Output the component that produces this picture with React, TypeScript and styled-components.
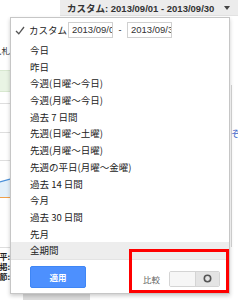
import styled, { createGlobalStyle } from "styled-components";

const GlobalStyle = createGlobalStyle`
  html, body {
    margin: 0;
    padding: 0;
    background: #ffffff;
  }
  body {
    font-family: "Noto Sans CJK JP", "Liberation Sans", sans-serif;
    color: #333;
  }
`;

const Page = styled.div`
  position: relative;
  width: 238px;
  height: 300px;
  overflow: hidden;
  background: #fff;
`;

const TopBar = styled.div`
  display: flex;
  justify-content: flex-end;
  height: 16px;
`;

const RangeButton = styled.div`
  width: 178px;
  display: flex;
  align-items: center;
  gap: 10px;
  padding-left: 7px;
  box-sizing: border-box;
  background: #ececec;
  border-bottom: 1px solid #e2e2e2;
  font-family: "Liberation Sans", "Noto Sans CJK JP", sans-serif;
  font-size: 9.5px;
  font-weight: bold;
  color: #333;
  white-space: nowrap;
`;

const Caret = styled.span`
  width: 0;
  height: 0;
  border-left: 3px solid transparent;
  border-right: 3px solid transparent;
  border-top: 4px solid #444;
`;

const Backdrop = styled.div`
  display: flex;
  justify-content: space-between;
  height: 278px;
`;

const LeftStrip = styled.div`
  width: 10px;
  display: flex;
  flex-direction: column;
  overflow: hidden;
`;

const CutText = styled.div<{ $top: number }>`
  margin-top: ${(p) => p.$top}px;
  display: flex;
  justify-content: flex-end;
  font-size: 8.5px;
  line-height: 12px;
  color: #333;
  white-space: nowrap;
`;

const GreenBand = styled.div`
  margin-top: 14px;
  height: 22px;
  box-sizing: border-box;
  background: #e9f4e4;
  border-top: 1px solid #d8e8d0;
  border-bottom: 1px solid #d8e8d0;
`;

const HLine = styled.div<{ $top: number }>`
  margin-top: ${(p) => p.$top}px;
  height: 1px;
  background: #dedede;
  flex: none;
`;

const Chart = styled.svg`
  margin-top: 15px;
  display: block;
  flex: none;
`;

const LabelStack = styled.div`
  margin-top: 4px;
  display: flex;
  flex-direction: column;
  align-items: flex-end;
  font-size: 8px;
  font-weight: bold;
  line-height: 10px;
  color: #222;
  white-space: nowrap;
`;

const RightStrip = styled.div`
  width: 8px;
  display: flex;
  flex-direction: column;
`;

const VLine = styled.div`
  margin-top: 69px;
  margin-left: 1px;
  width: 1px;
  height: 162px;
  background: #d6d6d6;
`;

const BlueFrag = styled.div`
  position: absolute;
  right: -2px;
  top: 127px;
  font-size: 9px;
  color: #3b64c8;
`;

const BottomStrip = styled.div`
  display: flex;
  padding-left: 23px;
  height: 6px;
`;

const GreyBlock = styled.div`
  width: 67px;
  background: #dcdcdc;
`;

const Menu = styled.div`
  position: absolute;
  left: 10px;
  top: 17px;
  width: 220px;
  height: 277px;
  box-sizing: border-box;
  background: #fff;
  border: 1px solid #c6c6c6;
  box-shadow: 0 2px 4px rgba(0, 0, 0, 0.2);
  display: flex;
  flex-direction: column;
`;

const CustomRow = styled.div`
  height: 24px;
  display: flex;
  align-items: center;
  padding-left: 4px;
  font-size: 9.5px;
  color: #222;
`;

const CheckSlot = styled.span`
  width: 14px;
  display: flex;
  align-items: center;
`;

const CustomLabel = styled.span`
  width: 39px;
  white-space: nowrap;
`;

const DateInput = styled.div`
  width: 45px;
  height: 16px;
  box-sizing: border-box;
  border: 1px solid #d0d0d0;
  padding-left: 3px;
  font-family: "Liberation Sans", sans-serif;
  font-size: 9.5px;
  line-height: 14px;
  color: #333;
  overflow: hidden;
  white-space: nowrap;
`;

const Dash = styled.span`
  width: 14px;
  text-align: center;
  font-family: "Liberation Sans", sans-serif;
  font-size: 9px;
`;

const List = styled.div`
  display: flex;
  flex-direction: column;
`;

const Item = styled.div<{ $active?: boolean }>`
  height: 16.7px;
  line-height: 16.7px;
  padding-left: 19px;
  font-size: 9.5px;
  color: #222;
  white-space: nowrap;
  background: ${(p) => (p.$active ? "#ededed" : "transparent")};
`;

const Footer = styled.div`
  flex: 1;
  display: flex;
  align-items: center;
  justify-content: space-between;
  padding: 1px 9px 0 19px;
  border-top: 1px solid #e3e3e3;
`;

const ApplyButton = styled.button`
  width: 56px;
  height: 22px;
  border: 1px solid #3f86f5;
  border-radius: 2px;
  background: #4d90fe;
  color: #fff;
  font-family: "Noto Sans CJK JP", sans-serif;
  font-size: 8.5px;
  font-weight: bold;
  padding: 0;
`;

const Compare = styled.div`
  display: flex;
  align-items: center;
  gap: 9px;
  padding-top: 4px;
`;

const CompareLabel = styled.span`
  font-size: 8.5px;
  color: #666;
`;

const Toggle = styled.div`
  display: flex;
  width: 51px;
  height: 16px;
  box-sizing: border-box;
  border: 1px solid #d4d4d4;
  border-radius: 2px;
  overflow: hidden;
`;

const ToggleHalf = styled.div<{ $on?: boolean }>`
  flex: ${(p) => (p.$on ? "0 0 23px" : "1")};
  display: flex;
  align-items: center;
  justify-content: center;
  background: ${(p) => (p.$on ? "#e4e4e4" : "#f6f6f6")};
  border-left: ${(p) => (p.$on ? "1px solid #d4d4d4" : "none")};
`;

const RedFrame = styled.div`
  position: absolute;
  left: 129px;
  top: 249px;
  width: 100px;
  height: 44px;
  box-sizing: border-box;
  border: 3px solid #ff0000;
`;

const ranges = [
  "今日",
  "昨日",
  "今週(日曜～今日)",
  "今週(月曜～今日)",
  "過去 7 日間",
  "先週(日曜～土曜)",
  "先週(月曜～日曜)",
  "先週の平日(月曜～金曜)",
  "過去 14 日間",
  "今月",
  "過去 30 日間",
  "先月",
  "全期間",
];

export default function App() {
  return (
    <Page>
      <GlobalStyle />
      <TopBar>
        <RangeButton>
          <span>カスタム: 2013/09/01 - 2013/09/30</span>
          <Caret />
        </RangeButton>
      </TopBar>
      <Backdrop>
        <LeftStrip>
          <CutText $top={28}>入札</CutText>
          <GreenBand />
          <HLine $top={11} />
          <HLine $top={28} />
          <HLine $top={27} />
          <Chart width="10" height="24" viewBox="0 0 10 24">
            <path d="M0 6 L10 3 L10 21 L0 21 Z" fill="#e3f0fa" />
            <path d="M0 6 L10 3" stroke="#4a90d9" strokeWidth="1.2" fill="none" />
            <path d="M0 21.5 L10 21.5" stroke="#f0a04b" strokeWidth="1" />
          </Chart>
          <HLine $top={47} />
          <LabelStack>
            <span>平:</span>
            <span>掲:</span>
            <span>節:</span>
          </LabelStack>
        </LeftStrip>
        <RightStrip>
          <VLine />
          <BlueFrag>ぞ</BlueFrag>
        </RightStrip>
      </Backdrop>
      <BottomStrip>
        <GreyBlock />
      </BottomStrip>

      <Menu>
        <CustomRow>
          <CheckSlot>
            <svg width="10" height="9" viewBox="0 0 10 9">
              <path d="M1 5 L3.8 7.8 L9 1" stroke="#555" strokeWidth="1.3" fill="none" />
            </svg>
          </CheckSlot>
          <CustomLabel>カスタム</CustomLabel>
          <DateInput>2013/09/01</DateInput>
          <Dash>-</Dash>
          <DateInput>2013/09/30</DateInput>
        </CustomRow>
        <List>
          {ranges.map((r) => (
            <Item key={r} $active={r === "全期間"}>
              {r}
            </Item>
          ))}
        </List>
        <Footer>
          <ApplyButton>適用</ApplyButton>
          <Compare>
            <CompareLabel>比較</CompareLabel>
            <Toggle>
              <ToggleHalf />
              <ToggleHalf $on>
                <svg width="9" height="9" viewBox="0 0 9 9">
                  <circle cx="4.5" cy="4.5" r="3.2" stroke="#555" strokeWidth="1.6" fill="none" />
                </svg>
              </ToggleHalf>
            </Toggle>
          </Compare>
        </Footer>
      </Menu>
      <RedFrame />
    </Page>
  );
}
